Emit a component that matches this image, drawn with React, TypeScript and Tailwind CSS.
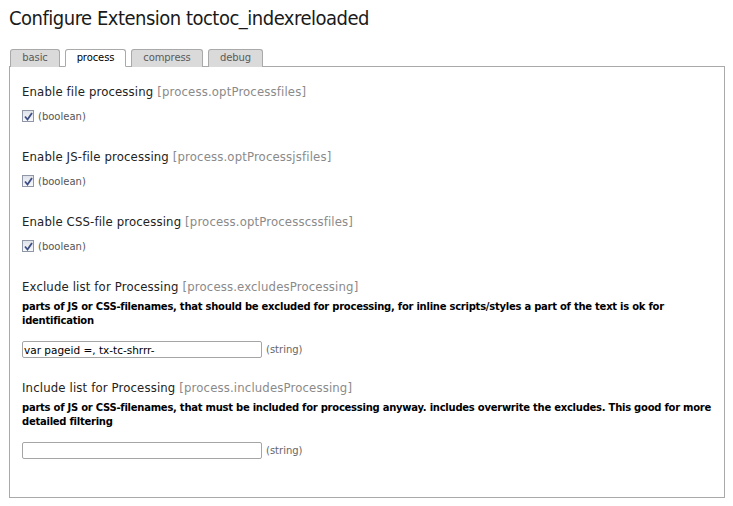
import React from 'react';

const TITLE_FONT = { fontFamily: '"DejaVu Sans Condensed", "DejaVu Sans", sans-serif' };
const BODY_FONT = { fontFamily: '"DejaVu Sans", Verdana, sans-serif' };

const tabs = [
  { label: 'basic', width: 'w-[50px]' },
  { label: 'process', width: 'w-[61px]' },
  { label: 'compress', width: 'w-[72px]' },
  { label: 'debug', width: 'w-[55px]' },
];

const Check: React.FC = () => (
  <span className="inline-flex w-[12px] h-[12px] border border-[#8f96a6] bg-gradient-to-b from-[#dfe3ea] to-[#f7f8fa] items-center justify-center">
    <svg width="9" height="9" viewBox="0 0 9 9">
      <path d="M1 4.5 L3.5 7.5 L8 1" fill="none" stroke="#3e4f86" strokeWidth="1.8" />
    </svg>
  </span>
);

const Label: React.FC<{ title: string; keyName: string }> = ({ title, keyName }) => (
  <div className="text-[13px] leading-[16px] text-[#222] tracking-[0.15px]" style={TITLE_FONT}>
    {title} <span className="text-[#8a8a8a]">[{keyName}]</span>
  </div>
);

const BoolField: React.FC<{ title: string; keyName: string }> = ({ title, keyName }) => (
  <div className="mb-[27px]">
    <Label title={title} keyName={keyName} />
    <div className="flex items-center gap-[4px] mt-[10px] h-[12px]">
      <Check />
      <span className="text-[10px] text-[#555]" style={BODY_FONT}>(boolean)</span>
    </div>
  </div>
);

const StringField: React.FC<{ title: string; keyName: string; desc: string; value: string }> = ({
  title,
  keyName,
  desc,
  value,
}) => (
  <div className="mb-[22px]">
    <Label title={title} keyName={keyName} />
    <p className="mt-[5px] text-[10px] leading-[14px] font-bold text-black tracking-[-0.25px]" style={BODY_FONT}>
      {desc}
    </p>
    <div className="flex items-center gap-[4px] mt-[13px]">
      <input
        readOnly
        value={value}
        className="w-[240px] h-[17px] border border-[#a5a5a5] rounded-[2px] px-[1px] text-[10.5px] text-black outline-none"
        style={BODY_FONT}
      />
      <span className="text-[10px] text-[#666]" style={BODY_FONT}>(string)</span>
    </div>
  </div>
);

export default function App() {
  return (
    <div className="w-[733px] h-[506px] bg-white pl-[9px] pt-[6px]">
      <h1 className="text-[20px] leading-[24px] text-[#1a1a1a] tracking-[-0.5px]" style={TITLE_FONT}>
        Configure Extension toctoc_indexreloaded
      </h1>
      <div className="flex gap-[5px] pl-px mt-[19px] h-[17px]">
        {tabs.map(t => {
          const active = t.label === 'process';
          return (
            <div
              key={t.label}
              className={`relative z-10 h-[18px] ${t.width} text-center border border-[#a9a9a9] rounded-t-[3px] text-[10px] leading-[16px] tracking-[-0.1px] ${
                active ? 'bg-white border-b-white text-black' : 'bg-[#dadada] border-b-0 text-[#5a5a5a]'
              }`}
              style={BODY_FONT}
            >
              {t.label}
            </div>
          );
        })}
      </div>
      <div className="w-[716px] h-[432px] border border-[#a9a9a9] px-[12px] pt-[17px]">
        <BoolField title="Enable file processing" keyName="process.optProcessfiles" />
        <BoolField title="Enable JS-file processing" keyName="process.optProcessjsfiles" />
        <BoolField title="Enable CSS-file processing" keyName="process.optProcesscssfiles" />
        <StringField
          title="Exclude list for Processing"
          keyName="process.excludesProcessing"
          desc="parts of JS or CSS-filenames, that should be excluded for processing, for inline scripts/styles a part of the text is ok for identification"
          value="var pageid =, tx-tc-shrrr-"
        />
        <StringField
          title="Include list for Processing"
          keyName="process.includesProcessing"
          desc="parts of JS or CSS-filenames, that must be included for processing anyway. includes overwrite the excludes. This good for more detailed filtering"
          value=""
        />
      </div>
    </div>
  );
}
